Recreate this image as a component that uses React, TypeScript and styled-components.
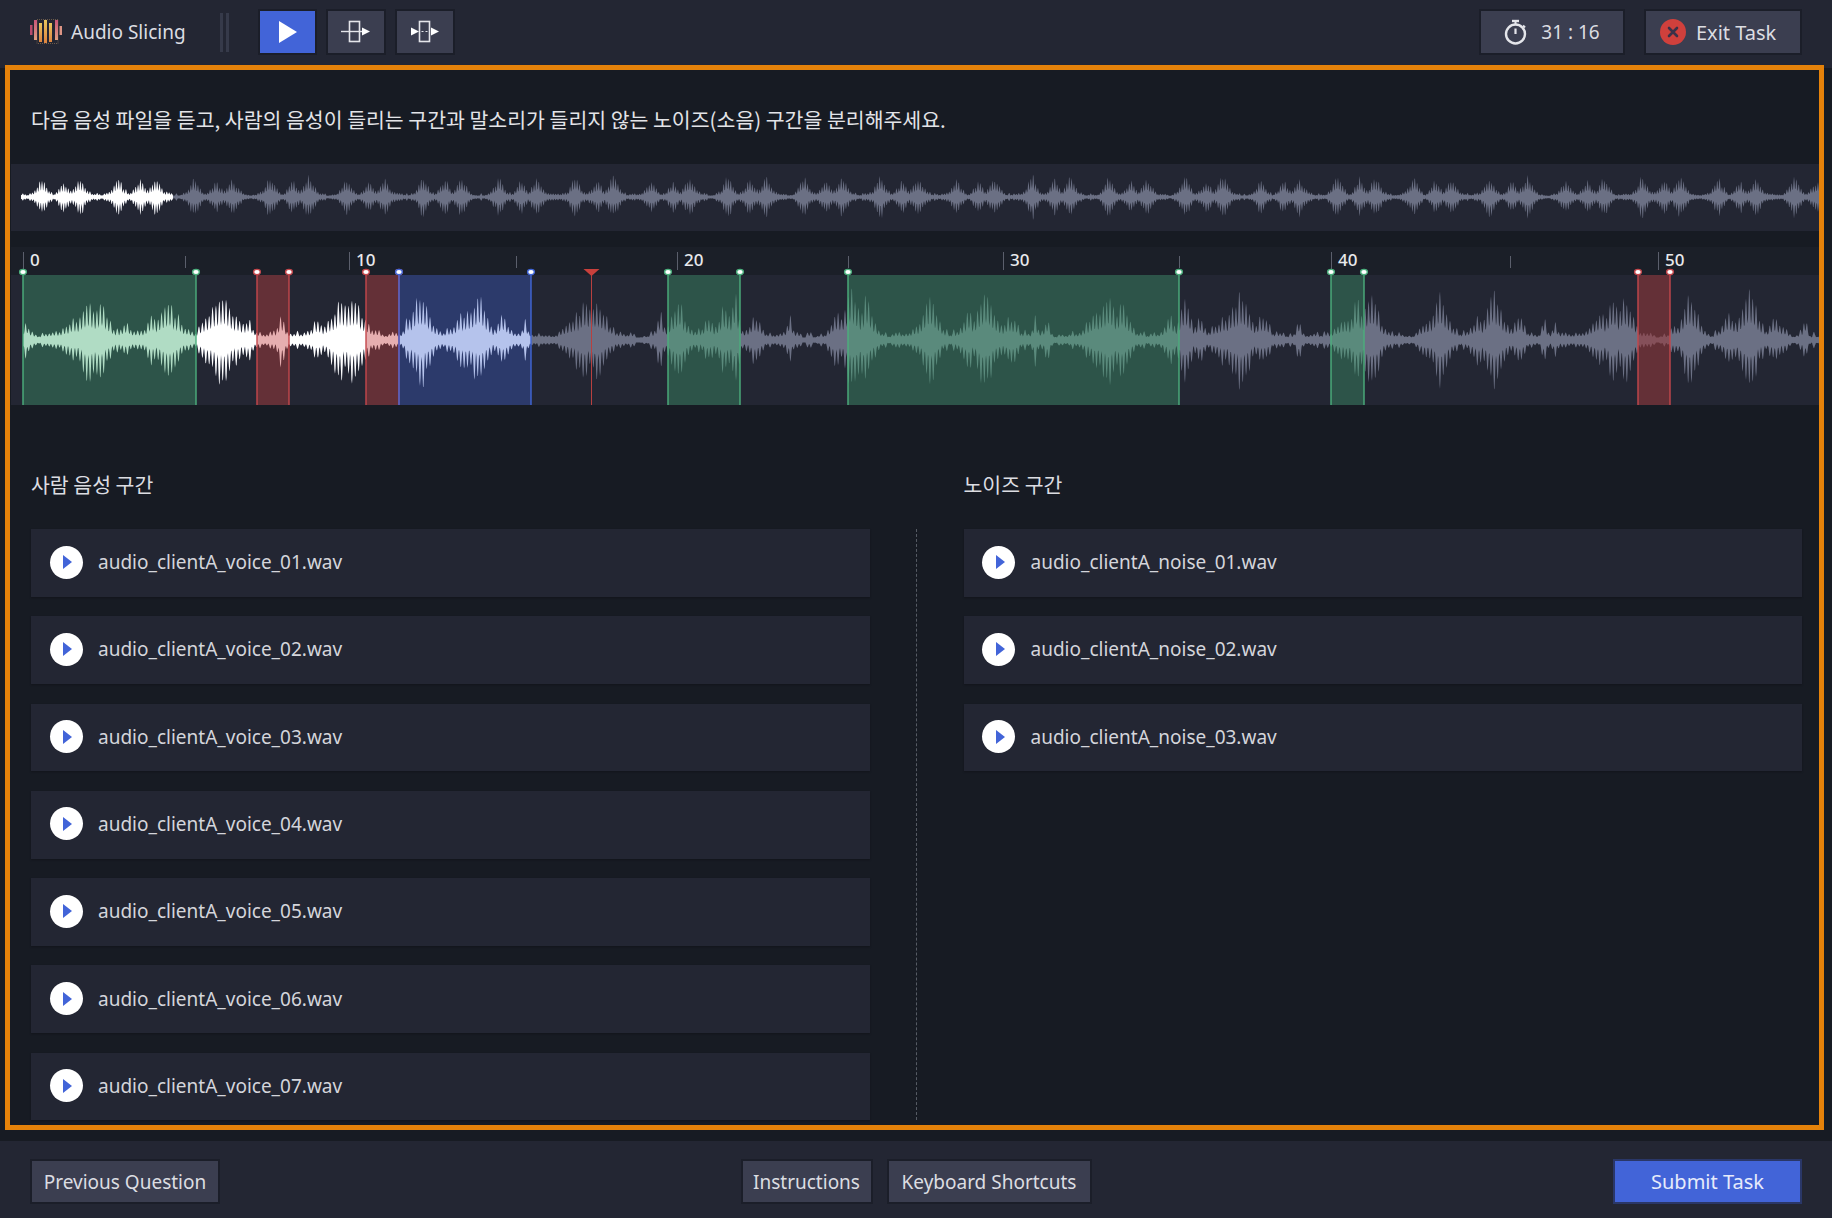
import styled, { createGlobalStyle } from "styled-components"

const GlobalStyle = createGlobalStyle`
    html, body {
        margin: 0;
        padding: 0;
        background: #171b23;
    }
    * {
        box-sizing: border-box;
    }
`

const Page = styled.div`
    width: 1832px;
    height: 1218px;
    overflow: hidden;
    background: #171b23;
    color: #dcdde2;
    font-family: "Noto Sans", "Noto Sans CJK KR", sans-serif;
    font-size: 19px;
`

const Header = styled.header`
    display: flex;
    align-items: center;
    height: 68px;
    margin-bottom: -3px;
    padding: 0 30px 4px;
    background: #232633;
`

const Brand = styled.div`
    display: flex;
    align-items: center;
    gap: 9px;
    width: 190px;
`

const Divider = styled.div`
    width: 9px;
    height: 39px;
    margin-right: 29px;
    border-left: 3px solid #363a4a;
    border-right: 3px solid #363a4a;
`

const ToolGroup = styled.div`
    display: flex;
    gap: 9px;
`

const ToolButton = styled.button<{ $primary?: boolean }>`
    display: flex;
    align-items: center;
    justify-content: center;
    width: ${(p) => (p.$primary ? 59 : 60)}px;
    height: 46px;
    padding: 0;
    border: 2px solid #1b1e29;
    background: ${(p) => (p.$primary ? "#4264d8" : "#3b3e50")};
`

const HeaderRight = styled.div`
    display: flex;
    gap: 19px;
    margin-left: auto;
`

const InfoBox = styled.div`
    display: flex;
    align-items: center;
    height: 46px;
    border: 2px solid #1b1e29;
    background: #3b3e50;
    font-family: inherit;
    color: #dcdde2;
`

const Timer = styled(InfoBox)`
    justify-content: center;
    gap: 13px;
    width: 146px;
    font-size: 19px;
`

const ExitButton = styled(InfoBox)`
    gap: 10px;
    width: 158px;
    padding-left: 14px;
    font-size: 20px;
`

const Panel = styled.main`
    position: relative;
    height: 1065px;
    margin: 0 8px 0 5px;
    border: 5px solid #e5820a;
    background: #171b23;
    overflow: hidden;
`

const Instruction = styled.p`
    margin: 36px 0 32px 21px;
    font-family: "Noto Sans CJK KR", sans-serif;
    font-size: 20.5px;
    line-height: 26px;
    color: #e3e4e8;
`

const Overview = styled.div`
    height: 67px;
    margin-left: 1px;
    background: #232633;
`

const Timeline = styled.section`
    margin: 16px 0 0 1px;
`

const Ruler = styled.div`
    position: relative;
    height: 28px;
    background: #1b1f28;
`

const Tick = styled.span<{ $x: number; $major?: boolean }>`
    position: absolute;
    left: ${(p) => p.$x - 11}px;
    top: ${(p) => (p.$major ? 5 : 9)}px;
    width: 1px;
    height: ${(p) => (p.$major ? 18 : 12)}px;
    background: #5b5f6c;
`

const TickLabel = styled.span<{ $x: number }>`
    position: absolute;
    left: ${(p) => p.$x - 4}px;
    top: 2px;
    font-size: 17px;
    font-weight: 500;
    line-height: 22px;
    color: #e8e9ec;
`

const Track = styled.div`
    position: relative;
    height: 130px;
    background: #232633;

    svg {
        display: block;
        overflow: visible;
    }
`

const Columns = styled.div`
    display: grid;
    grid-template-columns: 1fr 94px 1fr;
    margin-top: 66px;
    padding: 0 17px 0 21px;
`

const ColumnTitle = styled.h2`
    margin: 0 0 32px;
    font-family: "Noto Sans CJK KR", sans-serif;
    font-size: 20.5px;
    font-weight: 400;
    line-height: 26px;
    color: #dcdde2;
`

const FileList = styled.div`
    display: flex;
    flex-direction: column;
    gap: 19.6px;
`

const FileRow = styled.div`
    display: flex;
    align-items: center;
    gap: 15.5px;
    height: 67.7px;
    padding: 0 0 1.5px 18.5px;
    background: #232633;
    box-shadow: 0 1px 2px rgba(0, 0, 0, 0.25);
    color: #d4d5db;
`

const PlayCircle = styled.span`
    display: flex;
    align-items: center;
    justify-content: center;
    width: 33px;
    height: 33px;
    padding-left: 3px;
    border-radius: 50%;
    background: #fff;

    &::before {
        content: "";
        border-left: 9px solid #4264d8;
        border-top: 7px solid transparent;
        border-bottom: 7px solid transparent;
    }
`

const DashedLine = styled.div`
    justify-self: center;
    width: 0;
    margin-top: 58px;
    border-left: 1px dashed #565b64;
`

const Footer = styled.footer`
    display: grid;
    grid-template-columns: 1fr auto 1fr;
    align-items: center;
    height: 77px;
    margin-top: 11px;
    padding: 4px 30px 0;
    background: #232633;
`

const FooterCenter = styled.div`
    display: flex;
    gap: 14px;
`

const FooterButton = styled.button<{ $width: number }>`
    width: ${(p) => p.$width}px;
    height: 45px;
    padding: 0;
    border: 2px solid #1b1e29;
    background: #3b3e50;
    font-family: inherit;
    font-size: inherit;
    color: #dcdde2;
`

const SubmitButton = styled(FooterButton)`
    justify-self: end;
    border-color: #2a3768;
    background: #4264d8;
    font-size: 20px;
    color: #e6ebfb;
`

type Burst = [number, number, number]

const detailBursts: Burst[] = [
    [26, 2, 14], [75, 6, 18], [90, 9, 40], [100, 7, 36], [125, 5, 12], [152, 5, 20], [168, 8, 40], [180, 4, 14],
    [222, 10, 46], [207, 4, 22], [248, 4, 20], [281, 3, 22], [318, 7, 14], [340, 9, 38], [352, 8, 46],
    [421, 7, 46], [408, 3, 20], [466, 8, 28], [478, 6, 46], [503, 5, 20], [525, 2, 18],
    [585, 9, 36], [598, 7, 38], [660, 3, 24], [678, 6, 40], [708, 5, 18], [725, 6, 30], [735, 3, 44],
    [755, 5, 20], [790, 2, 20], [838, 5, 24], [852, 7, 48], [866, 5, 42], [930, 6, 47], [968, 6, 24],
    [985, 7, 47], [1010, 6, 22], [1035, 2, 20], [1047, 2, 18], [1096, 7, 24], [1108, 7, 42], [1122, 5, 38],
    [1170, 3, 24], [1185, 4, 44], [1200, 4, 16], [1222, 6, 18], [1240, 8, 46], [1263, 5, 20], [1299, 2, 24],
    [1345, 6, 18], [1357, 5, 38], [1372, 6, 48], [1440, 6, 46], [1426, 4, 16], [1478, 5, 22], [1494, 7, 48],
    [1520, 4, 22], [1544, 2, 18], [1555, 2, 18], [1600, 6, 24], [1613, 5, 42], [1625, 6, 44], [1690, 6, 42],
    [1675, 3, 14], [1730, 6, 22], [1750, 7, 48], [1775, 5, 20], [1805, 2, 22],
]

const overviewAmps = [
    [16, 15, 18],
    [21, 18, 19],
    [19, 15, 18],
    [21, 15, 21],
]

const overviewBursts: Burst[] = []
for (let k = 0; k < 25; k++) {
    const a = overviewAmps[k % 4]
    overviewBursts.push([42 + 76.2 * k, 3.8, a[0]], [64 + 76.2 * k, 3.8, a[1]], [80 + 76.2 * k, 4.2, a[2]])
}

const hash = (n: number) => {
    const s = Math.sin(n * 12.9898) * 43758.5453
    return s - Math.floor(s)
}

// builds a filled, mirrored wave form outline around the center line
const buildWave = (
    start: number,
    end: number,
    center: number,
    bursts: Burst[],
    base: number,
    period: number,
) => {
    const upper: string[] = []
    const lower: string[] = []
    const k = Math.PI / period
    for (let x = start; x <= end; x += 0.5) {
        let env = 0
        for (const [c, w, a] of bursts) {
            const d = Math.abs(x - c) / w
            if (d < 5) env = Math.max(env, a * Math.exp(-Math.pow(d, 1.6) * 0.5))
        }
        const n = Math.floor(x / period)
        const comb = 0.32 + 0.68 * Math.pow(Math.abs(Math.sin(x * k)), 2.2)
        const quiet = base * (0.35 + 0.9 * comb * hash(n + 0.3))
        const up = quiet + env * comb * (0.72 + hash(n) * 0.28)
        const down = quiet + env * comb * (0.72 + hash(n + 11) * 0.28)
        upper.push(`${x} ${(center - up).toFixed(1)}`)
        lower.unshift(`${x} ${(center + down).toFixed(1)}`)
    }
    return `M${upper.join("L")}L${lower.join("L")}Z`
}

const detailPath = buildWave(23, 1819, 65, detailBursts, 7, 3.4)
const overviewPath = buildWave(21, 1819, 33, overviewBursts, 3.2, 2.4)

const GREEN = { bg: "#2d5449", line: "#4caf7d" }
const RED = { bg: "#643037", line: "#c4474c" }
const BLUE = { bg: "#2c3a6b", line: "#4066d8" }

const regions = [
    { from: 23, to: 196, kind: GREEN, wave: "#b0dcc4" },
    { from: 257, to: 289, kind: RED, wave: "#e6aeb0" },
    { from: 366, to: 399, kind: RED, wave: "#e6aeb0" },
    { from: 399, to: 531, kind: BLUE, wave: "#b5c3ec" },
    { from: 668, to: 740, kind: GREEN, wave: "#5a8a7c" },
    { from: 848, to: 1179, kind: GREEN, wave: "#5a8a7c" },
    { from: 1331, to: 1364, kind: GREEN, wave: "#5a8a7c" },
    { from: 1638, to: 1670, kind: RED, wave: "#85505a" },
]

const ticks = [
    { x: 23, label: "0" },
    { x: 185 },
    { x: 349, label: "10" },
    { x: 516 },
    { x: 677, label: "20" },
    { x: 848 },
    { x: 1003, label: "30" },
    { x: 1179 },
    { x: 1331, label: "40" },
    { x: 1510 },
    { x: 1658, label: "50" },
]

const voiceFiles = ["01", "02", "03", "04", "05", "06", "07"].map((n) => `audio_clientA_voice_${n}.wav`)
const noiseFiles = ["01", "02", "03"].map((n) => `audio_clientA_noise_${n}.wav`)

const LogoIcon = () => (
    <svg width="32" height="26" viewBox="30 20 32 26">
        <defs>
            <linearGradient id="logoPink" x1="0" y1="0" x2="0" y2="1">
                <stop offset="0" stopColor="#c9557a" />
                <stop offset="1" stopColor="#e0a080" />
            </linearGradient>
            <linearGradient id="logoGold" x1="0" y1="0" x2="0" y2="1">
                <stop offset="0" stopColor="#e8c65c" />
                <stop offset="1" stopColor="#dd8340" />
            </linearGradient>
        </defs>
        <rect x="37" y="20.5" width="21" height="24" fill="none" stroke="#6b5a4a" strokeWidth="1" strokeDasharray="1 1" />
        <rect x="30" y="26" width="2.5" height="10" fill="#b84a6c" />
        <rect x="34" y="21" width="3" height="20" fill="url(#logoPink)" />
        <rect x="39" y="24" width="3" height="19" fill="url(#logoGold)" />
        <rect x="44" y="21" width="3" height="23" fill="url(#logoGold)" />
        <rect x="49" y="24" width="3" height="19" fill="url(#logoGold)" />
        <rect x="55" y="21" width="3" height="20" fill="url(#logoPink)" />
        <rect x="59.5" y="27" width="2.5" height="9" fill="#dc9485" />
    </svg>
)

const PlayIcon = () => (
    <svg width="20" height="24" viewBox="0 0 20 24">
        <path d="M1 1 L19 12 L1 23 Z" fill="#fff" />
    </svg>
)

const SliceIcon = () => (
    <svg width="30" height="24" viewBox="0 0 30 24">
        <rect x="8.5" y="1.5" width="10" height="20" fill="none" stroke="#e4e5ea" strokeWidth="1.6" />
        <path d="M0 11.5 H21" stroke="#e4e5ea" strokeWidth="1.4" />
        <path d="M21 7.5 L29 11.5 L21 15.5 Z" fill="#fff" />
    </svg>
)

const SplitIcon = () => (
    <svg width="30" height="24" viewBox="0 0 30 24">
        <rect x="9.5" y="1.5" width="10" height="20" fill="none" stroke="#e4e5ea" strokeWidth="1.6" />
        <path d="M11.5 11.5 H18" stroke="#e4e5ea" strokeWidth="1.2" strokeDasharray="2 2" />
        <path d="M1 7.5 L9 11.5 L1 15.5 Z" fill="#fff" />
        <path d="M21 7.5 L29 11.5 L21 15.5 Z" fill="#fff" />
    </svg>
)

const StopwatchIcon = () => (
    <svg width="24" height="26" viewBox="0 0 24 26" fill="none" stroke="#e4e5ea">
        <circle cx="11.5" cy="15" r="9.5" strokeWidth="2.4" />
        <path d="M8 2 H15" strokeWidth="2.4" />
        <path d="M11.5 3 V5" strokeWidth="2" />
        <path d="M11.5 9.5 V15" strokeWidth="2.2" />
        <path d="M19 6.5 L21 8.5" strokeWidth="2" />
    </svg>
)

const ExitIcon = () => (
    <svg width="26" height="26" viewBox="0 0 26 26">
        <circle cx="13" cy="13" r="13" fill="#d0403c" />
        <path d="M9 9 L17 17 M17 9 L9 17" stroke="#3b3148" strokeWidth="2.6" strokeLinecap="round" />
    </svg>
)

const OverviewWave = () => (
    <svg width="1808" height="67" viewBox="11 0 1808 67" style={{ display: "block" }}>
        <defs>
            <clipPath id="overviewPlayed">
                <rect x="11" y="0" width="162" height="67" />
            </clipPath>
        </defs>
        <path d={overviewPath} fill="#6b7084" />
        <path d={overviewPath} fill="#fff" clipPath="url(#overviewPlayed)" />
    </svg>
)

const DetailWave = () => (
    <svg width="1808" height="130" viewBox="11 0 1808 130">
        <defs>
            <clipPath id="playedClip">
                <rect x="196" y="0" width="170" height="130" />
            </clipPath>
            {regions.map((r) => (
                <clipPath id={`region${r.from}`} key={r.from}>
                    <rect x={r.from} y="0" width={r.to - r.from} height="130" />
                </clipPath>
            ))}
        </defs>
        <path d={detailPath} fill="#6b7084" />
        <path d={detailPath} fill="#fff" clipPath="url(#playedClip)" />
        {regions.map((r) => (
            <g key={r.from}>
                <rect x={r.from} y="0" width={r.to - r.from} height="130" fill={r.kind.bg} />
                <path d={detailPath} fill={r.wave} clipPath={`url(#region${r.from})`} />
            </g>
        ))}
        <path d="M591.5 0 V130" stroke="#b8403f" strokeWidth="1" />
        <path d="M583.5 -6 H599.5 L591.5 1 Z" fill="#c9403c" />
        {regions.map((r) => (
            <g key={r.from} stroke={r.kind.line} fill="#fff">
                <path d={`M${r.from} 0 V130 M${r.to} 0 V130`} strokeWidth="1.4" />
                <ellipse cx={r.from} cy="-3" rx="3.4" ry="2.6" strokeWidth="1.4" />
                <ellipse cx={r.to} cy="-3" rx="3.4" ry="2.6" strokeWidth="1.4" />
            </g>
        ))}
    </svg>
)

const FileColumn = ({ title, files }: { title: string; files: string[] }) => (
    <div>
        <ColumnTitle>{title}</ColumnTitle>
        <FileList>
            {files.map((name) => (
                <FileRow key={name}>
                    <PlayCircle />
                    {name}
                </FileRow>
            ))}
        </FileList>
    </div>
)

export default function App() {
    return (
        <Page>
            <GlobalStyle />
            <Header>
                <Brand>
                    <LogoIcon />
                    Audio Slicing
                </Brand>
                <Divider />
                <ToolGroup>
                    <ToolButton $primary>
                        <PlayIcon />
                    </ToolButton>
                    <ToolButton>
                        <SliceIcon />
                    </ToolButton>
                    <ToolButton>
                        <SplitIcon />
                    </ToolButton>
                </ToolGroup>
                <HeaderRight>
                    <Timer>
                        <StopwatchIcon />
                        31 : 16
                    </Timer>
                    <ExitButton>
                        <ExitIcon />
                        Exit Task
                    </ExitButton>
                </HeaderRight>
            </Header>
            <Panel>
                <Instruction>
                    다음 음성 파일을 듣고, 사람의 음성이 들리는 구간과 말소리가 들리지 않는 노이즈(소음) 구간을 분리해주세요.
                </Instruction>
                <Overview>
                    <OverviewWave />
                </Overview>
                <Timeline>
                    <Ruler>
                        {ticks.map((t) => (
                            <Tick key={t.x} $x={t.x} $major={!!t.label} />
                        ))}
                        {ticks
                            .filter((t) => t.label)
                            .map((t) => (
                                <TickLabel key={t.x} $x={t.x}>
                                    {t.label}
                                </TickLabel>
                            ))}
                    </Ruler>
                    <Track>
                        <DetailWave />
                    </Track>
                </Timeline>
                <Columns>
                    <FileColumn title="사람 음성 구간" files={voiceFiles} />
                    <DashedLine />
                    <FileColumn title="노이즈 구간" files={noiseFiles} />
                </Columns>
            </Panel>
            <Footer>
                <div>
                    <FooterButton $width={190}>Previous Question</FooterButton>
                </div>
                <FooterCenter>
                    <FooterButton $width={132}>Instructions</FooterButton>
                    <FooterButton $width={205}>Keyboard Shortcuts</FooterButton>
                </FooterCenter>
                <SubmitButton $width={189}>Submit Task</SubmitButton>
            </Footer>
        </Page>
    )
}
